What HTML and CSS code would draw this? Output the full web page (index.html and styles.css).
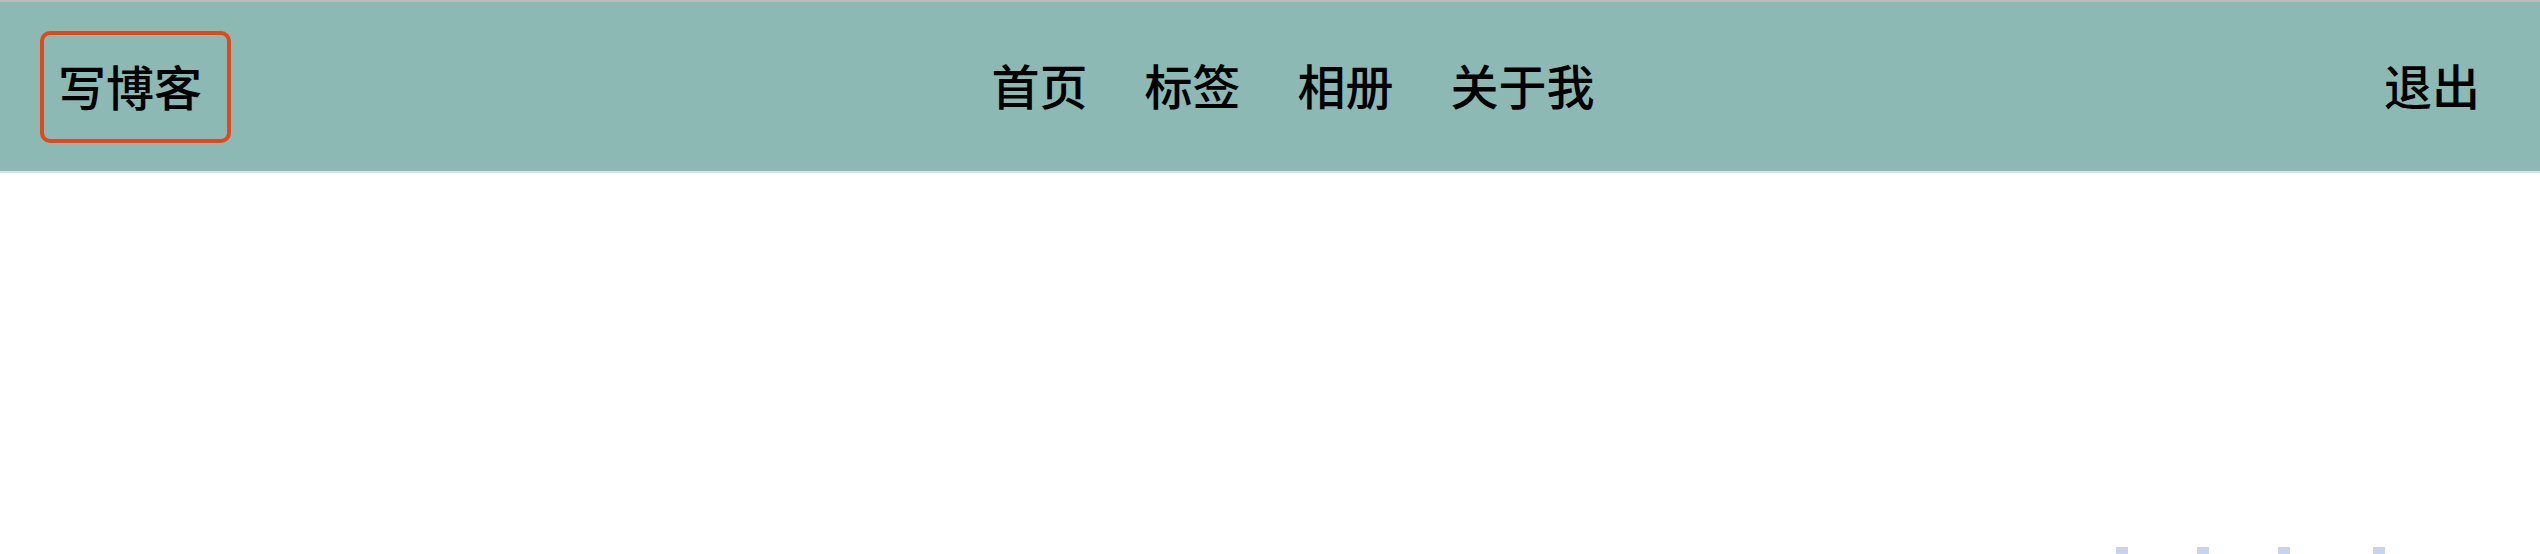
FILE: index.html
```html
<!DOCTYPE html>
<html lang="zh">
<head>
<meta charset="utf-8">
<title>博客</title>
<link rel="stylesheet" href="styles.css">
</head>
<body>
<header class="topbar">
  <a class="write-btn" href="#"><span class="label">写博客</span></a>
  <nav class="nav">
    <a class="nav-item label" href="#">首页</a>
    <a class="nav-item label" href="#">标签</a>
    <a class="nav-item label" href="#">相册</a>
    <a class="nav-item label" href="#">关于我</a>
  </nav>
  <a class="logout label" href="#">退出</a>
</header>
<main class="content">
  <div class="dots">
    <span class="dot"></span>
    <span class="dot"></span>
    <span class="dot"></span>
    <span class="dot"></span>
  </div>
</main>
</body>
</html>
```
FILE: styles.css
```css
html, body {
  margin: 0;
  padding: 0;
  background: #ffffff;
  height: 100%;
  overflow: hidden;
}
body {
  font-family: "Noto Sans CJK SC", "Noto Sans", sans-serif;
  border-top: 2px solid #bcbcbc;
  box-sizing: border-box;
}
a {
  color: #000;
  text-decoration: none;
}
.topbar {
  height: 169px;
  background: #8cb9b4;
  border-bottom: 2px solid #d6e6e3;
  display: flex;
  align-items: center;
  padding: 0 60px 0 40px;
  font-size: 48px;
  line-height: 1;
  font-weight: 500;
}
.label {
  padding-bottom: 5px;
}
.write-btn {
  box-sizing: border-box;
  width: 191px;
  height: 112px;
  border: 4px solid #df4a1c;
  border-radius: 10px;
  display: flex;
  align-items: center;
  padding-left: 14px;
  margin-top: 1px;
}
.nav {
  flex: 1;
  display: flex;
  justify-content: center;
  gap: 57px;
  padding-right: 29px;
}
.content {
  height: 381px;
  display: flex;
  align-items: flex-end;
  justify-content: flex-end;
}
.dots {
  display: flex;
  padding-right: 155px;
}
.dot {
  width: 12px;
  height: 7px;
  background: #c9d3ee;
  margin-left: 69px;
}
.dot:first-child { margin-left: 0; }
.dot:last-child { margin-left: 83px; }
```
